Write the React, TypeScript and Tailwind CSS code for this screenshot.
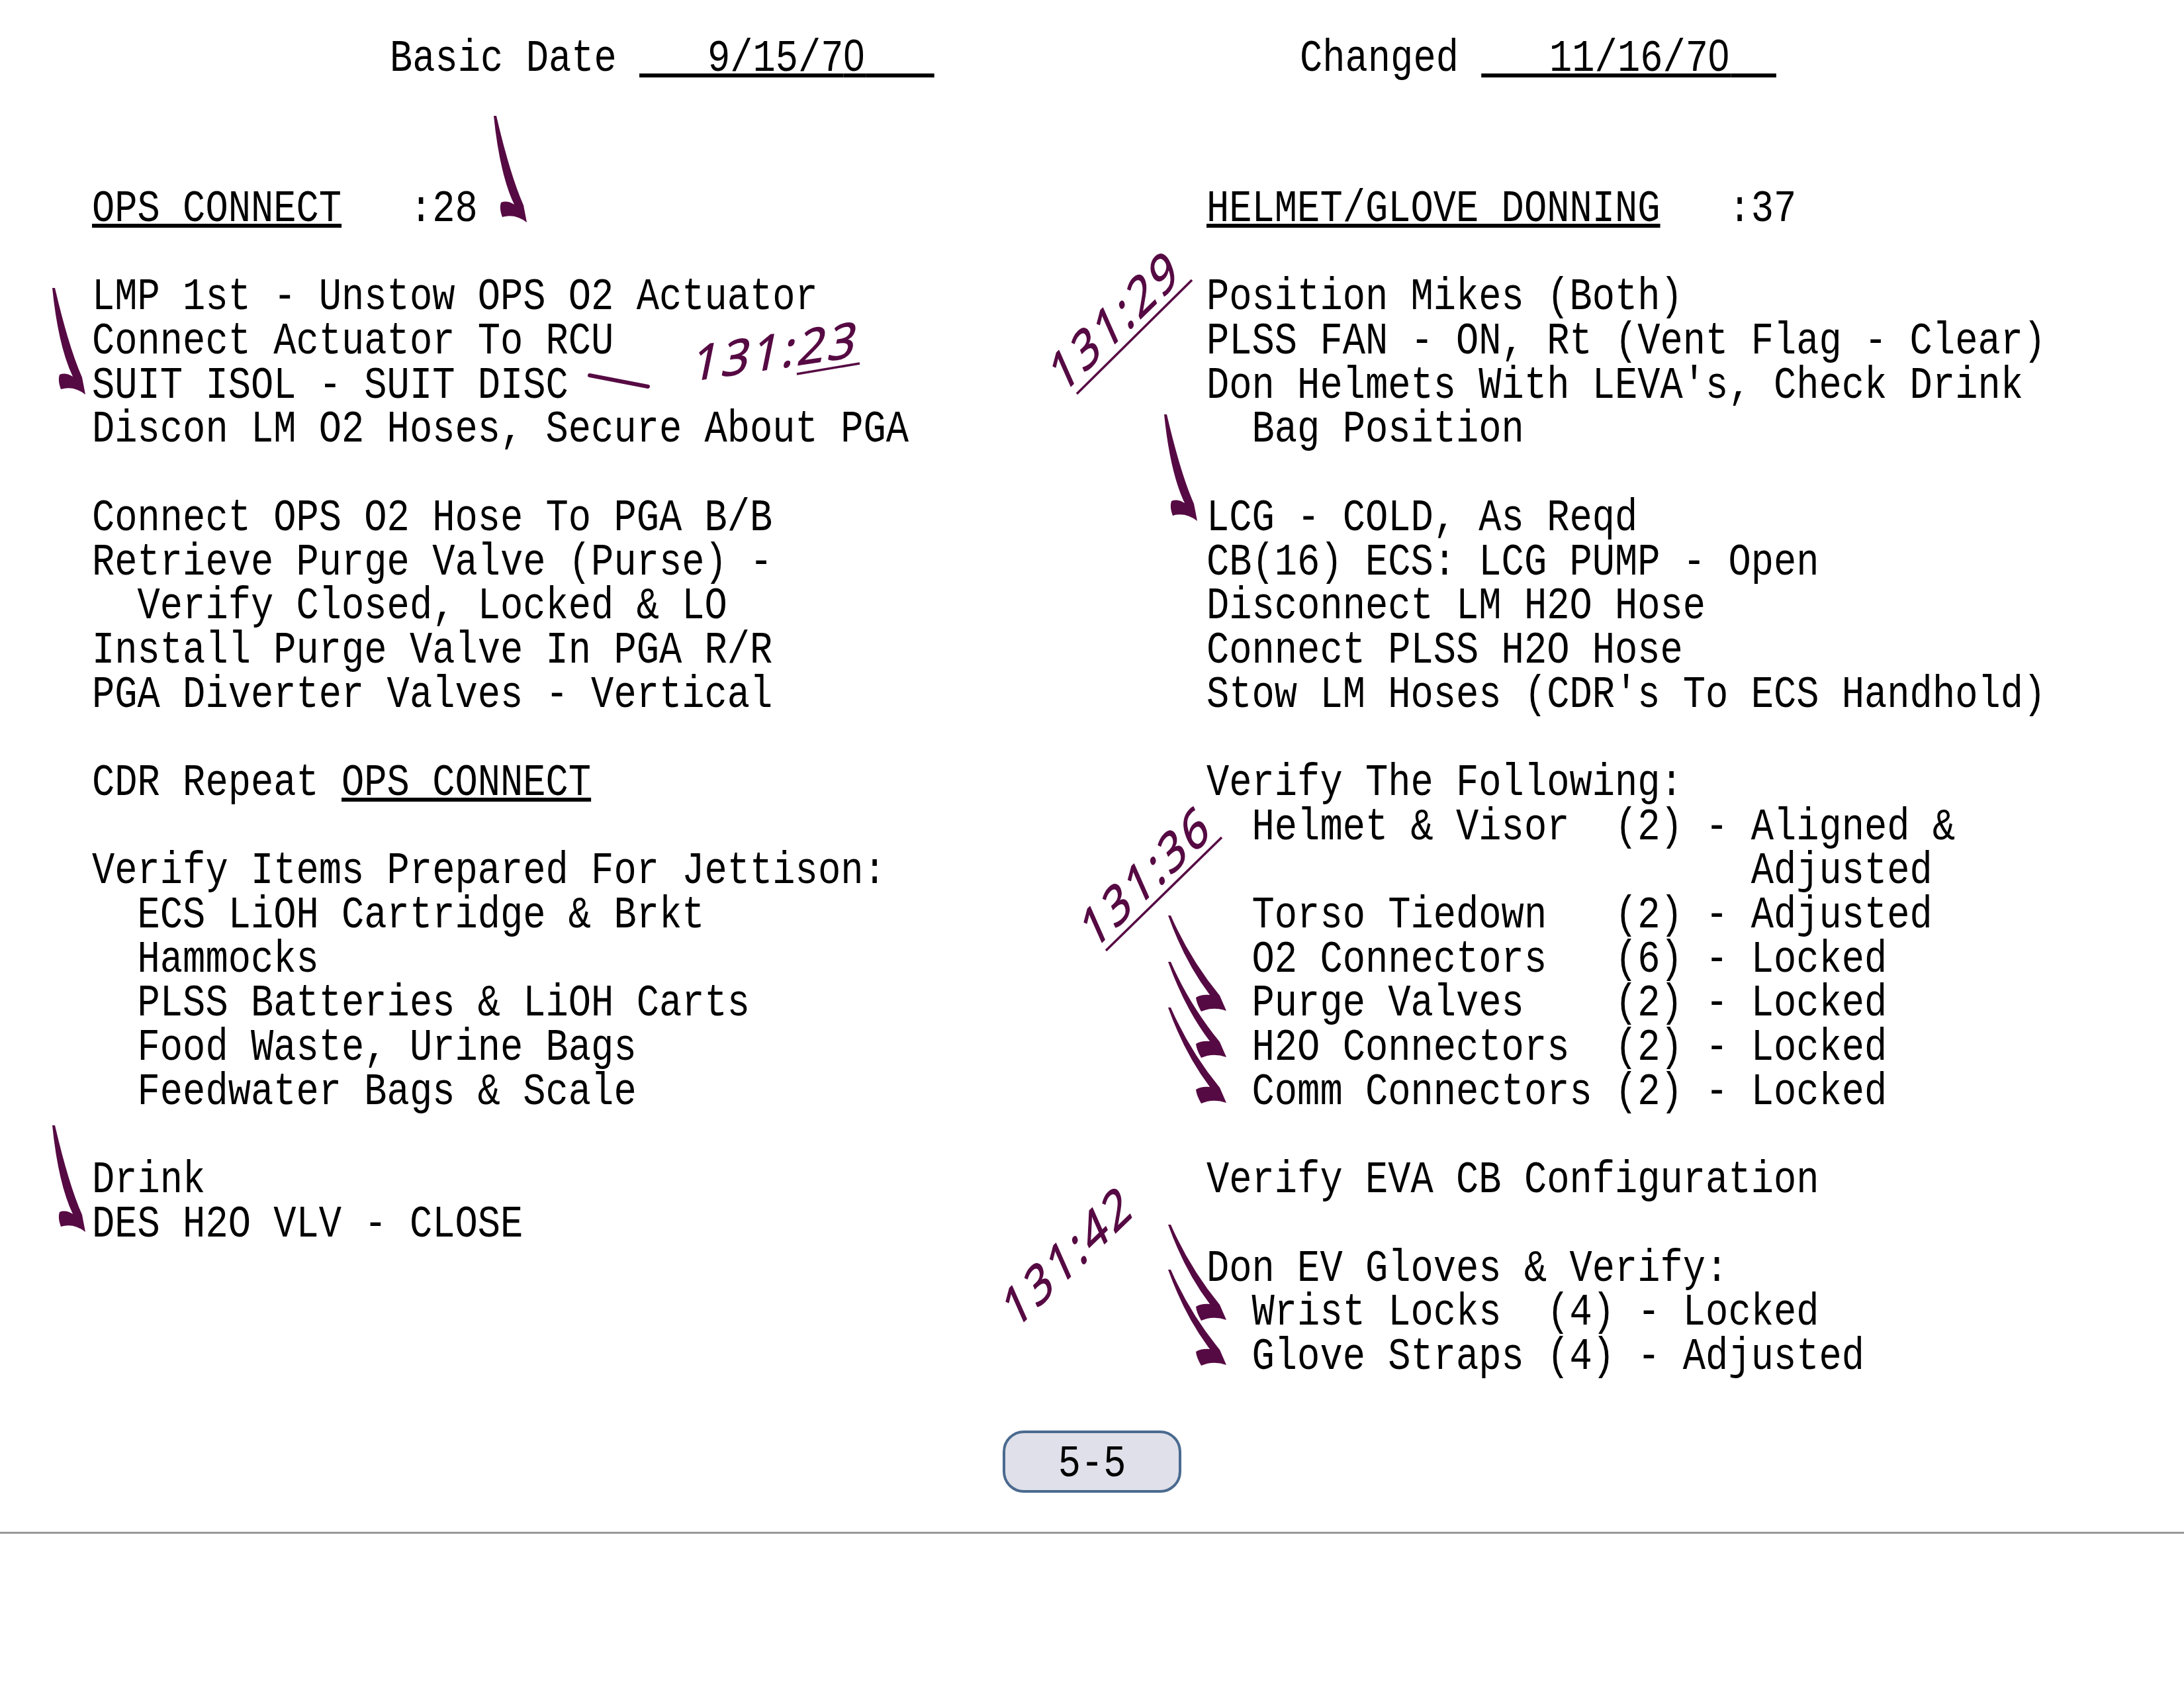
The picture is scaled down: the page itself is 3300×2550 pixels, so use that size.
import React from 'react';

const leftLines: React.ReactNode[] = [
  <><span className="underline">OPS CONNECT</span>{'   :28'}</>,
  ' ',
  'LMP 1st - Unstow OPS O2 Actuator',
  'Connect Actuator To RCU',
  'SUIT ISOL - SUIT DISC',
  'Discon LM O2 Hoses, Secure About PGA',
  ' ',
  'Connect OPS O2 Hose To PGA B/B',
  'Retrieve Purge Valve (Purse) -',
  '  Verify Closed, Locked & LO',
  'Install Purge Valve In PGA R/R',
  'PGA Diverter Valves - Vertical',
  ' ',
  <>CDR Repeat <span className="underline">OPS CONNECT</span></>,
  ' ',
  'Verify Items Prepared For Jettison:',
  '  ECS LiOH Cartridge & Brkt',
  '  Hammocks',
  '  PLSS Batteries & LiOH Carts',
  '  Food Waste, Urine Bags',
  '  Feedwater Bags & Scale',
  ' ',
  'Drink',
  'DES H2O VLV - CLOSE',
];

const rightLines: React.ReactNode[] = [
  <><span className="underline">HELMET/GLOVE DONNING</span>{'   :37'}</>,
  ' ',
  'Position Mikes (Both)',
  'PLSS FAN - ON, Rt (Vent Flag - Clear)',
  "Don Helmets With LEVA's, Check Drink",
  '  Bag Position',
  ' ',
  'LCG - COLD, As Reqd',
  'CB(16) ECS: LCG PUMP - Open',
  'Disconnect LM H2O Hose',
  'Connect PLSS H2O Hose',
  "Stow LM Hoses (CDR's To ECS Handhold)",
  ' ',
  'Verify The Following:',
  '  Helmet & Visor  (2) - Aligned &',
  '                        Adjusted',
  '  Torso Tiedown   (2) - Adjusted',
  '  O2 Connectors   (6) - Locked',
  '  Purge Valves    (2) - Locked',
  '  H2O Connectors  (2) - Locked',
  '  Comm Connectors (2) - Locked',
  ' ',
  'Verify EVA CB Configuration',
  ' ',
  'Don EV Gloves & Verify:',
  '  Wrist Locks  (4) - Locked',
  '  Glove Straps (4) - Adjusted',
];

const curved = 'M0 0L4 0Q25 90 45 135L50 161Q32 147 13 153Q8 140 11 131Q20 127 31 134Q9 88 0 0Z';
const diagonal = 'M0 0L4 0Q33 66 78 121L88 144Q68 137 50 145Q43 133 42 124Q50 119 63 120Q25 70 0 0Z';

const arrows = [
  { d: curved, x: 746, y: 175 },
  { d: curved, x: 79, y: 435 },
  { d: curved, x: 79, y: 1700 },
  { d: curved, x: 1759, y: 626 },
  { d: diagonal, x: 1765, y: 1383 },
  { d: diagonal, x: 1765, y: 1453 },
  { d: diagonal, x: 1765, y: 1522 },
  { d: diagonal, x: 1765, y: 1850 },
  { d: diagonal, x: 1765, y: 1918 },
];

const stamps = [
  { text: '131:23', x: 1042, y: 576, rotate: -8.5 },
  { text: '131:29', x: 1604, y: 597, rotate: -44 },
  { text: '131:36', x: 1651, y: 1437, rotate: -44 },
  { text: '131:42', x: 1533, y: 2010, rotate: -44 },
];

// the typed zero has no dot in the original, Liberation Sans has the plain one
function Zero() {
  return <span className="font-['Liberation_Sans',sans-serif] tracking-[0.044em]">0</span>;
}

function Lines({ lines }: { lines: React.ReactNode[] }) {
  return (
    <div className="origin-top-left scale-x-[0.84] whitespace-pre">
      {lines.map((line, i) => (
        <div key={i} className="h-[66.7px]">{line}</div>
      ))}
    </div>
  );
}

export default function App() {
  return (
    <div className="relative min-h-[2550px] w-[3300px] bg-white text-black font-['Liberation_Mono',monospace] text-[68px] leading-[66.7px] overflow-hidden">
      {/* Header */}
      <div className="grid grid-cols-[1684px_1fr] pl-[139px] pt-[50px] h-[283px]">
        <div className="pl-[450px]">
          <div className="origin-top-left scale-x-[0.84] whitespace-pre">
            Basic Date <span className="underline">{'   9/15/7'}<Zero />{'   '}</span>
          </div>
        </div>
        <div className="pl-[141px]">
          <div className="origin-top-left scale-x-[0.84] whitespace-pre">
            Changed <span className="underline">{'   11/16/7'}<Zero />{'  '}</span>
          </div>
        </div>
      </div>

      {/* Checklist columns */}
      <div className="grid grid-cols-[1684px_1fr] pl-[139px] h-[1878px]">
        <Lines lines={leftLines} />
        <Lines lines={rightLines} />
      </div>

      {/* Page number */}
      <div className="flex justify-center">
        <div className="w-[270px] h-[94px] pt-[8px] rounded-[32px] border-[4px] border-[#4a6a8f] bg-[#e0e0ea] flex items-center justify-center">
          <span className="text-[68px] scale-x-[0.84]">5-5</span>
        </div>
      </div>
      <div className="mt-[59px] h-[3px] bg-[#999999]" />

      {/* Handwritten annotations */}
      <svg className="absolute inset-0 pointer-events-none" width="3300" height="2550" viewBox="0 0 3300 2550">
        {arrows.map((a, i) => (
          <path key={i} d={a.d} transform={`translate(${a.x} ${a.y})`} fill="#560a43" />
        ))}
        <path d="M891 567L979 584" stroke="#560a43" strokeWidth="6" strokeLinecap="round" />
        <path d="M1204 565L1299 549" stroke="#560a43" strokeWidth="3.5" />
        <path d="M1627 595L1801 423" stroke="#560a43" strokeWidth="3.5" />
        <path d="M1671 1436L1846 1265" stroke="#560a43" strokeWidth="3.5" />
        {stamps.map((s, i) => (
          <text
            key={i}
            transform={`translate(${s.x} ${s.y}) rotate(${s.rotate}) skewX(-20)`}
            fill="#560a43"
            stroke="#560a43"
            strokeWidth="1.5"
            strokeLinejoin="round"
            fontSize="72"
            letterSpacing="5"
            className="font-['Open_Sans',sans-serif]"
          >
            {s.text}
          </text>
        ))}
      </svg>
    </div>
  );
}
